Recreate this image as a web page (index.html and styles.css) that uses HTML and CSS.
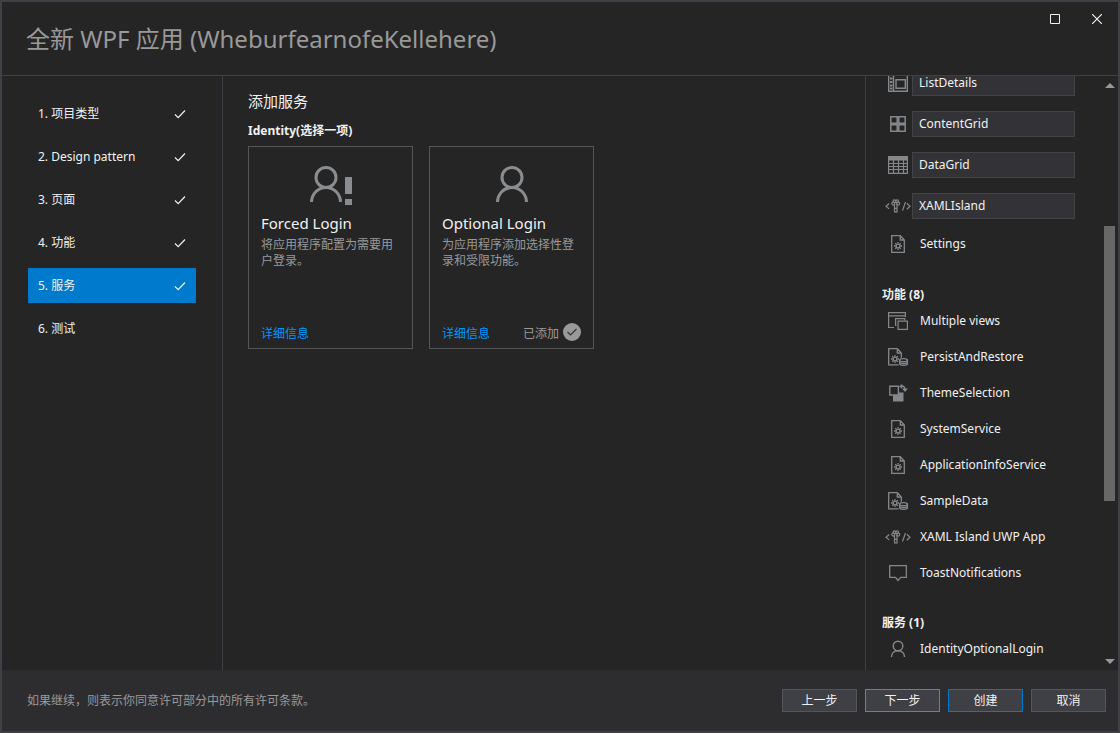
FILE: index.html
```html
<!DOCTYPE html>
<html lang="zh-CN">
<head>
<meta charset="utf-8">
<title>全新 WPF 应用</title>
<link rel="stylesheet" href="styles.css">
</head>
<body>
<svg class="defs" aria-hidden="true">
  <symbol id="check" viewBox="0 0 12 12"><path d="M1 6.500 4.200 9.700 11 2.500" fill="none" stroke="currentColor" stroke-width="1.200"/></symbol>
  <symbol id="user" viewBox="0 0 32 36"><g fill="none" stroke="currentColor" stroke-width="3"><circle cx="16" cy="11.500" r="10"/><path d="M1.500 36.500C1.500 28 8 21.500 16 21.500s14.500 6.500 14.500 15"/></g></symbol>
  <symbol id="user-small" viewBox="0 0 16 18"><g fill="none" stroke="currentColor" stroke-width="1.400"><circle cx="8" cy="6" r="4.800"/><path d="M1.500 17C1.500 13.500 4 10.800 8 10.800s6.500 2.700 6.500 6.200"/></g></symbol>
  <symbol id="list-details" viewBox="0 0 20 18"><g fill="none" stroke="currentColor" stroke-width="1.400"><path d="M.7.7h18.600v16.600H.7zM5.500 1v16M8 5.700h9.300v8.600H8z"/><path d="M2 4.500h2.500M2 8h2.500M2 11.500h2.500M2 14.500h2.500" stroke-width="2"/></g></symbol>
  <symbol id="content-grid" viewBox="0 0 16 16"><path d="M.8.8h6.400v6.400H.8zM8.800.8h6.400v6.400H8.800zM.8 8.800h6.400v6.400H.8zM8.800 8.800h6.400v6.400H8.800z" fill="none" stroke="currentColor" stroke-width="1.500"/></symbol>
  <symbol id="data-grid" viewBox="0 0 20 18"><path d="M0 0h20v4.500H0z" fill="currentColor"/><path d="M.6.6h18.800v16.800H.6zM5.500 4v13.500M10.500 4v13.500M15.500 4v13.500M1 7.500h18M1 10.500h18M1 13.500h18" fill="none" stroke="currentColor" stroke-width="1.200"/></symbol>
  <symbol id="xaml" viewBox="0 0 26 14"><g fill="none" stroke="currentColor" stroke-width="1.200"><path d="M4.200 4.500 1 7.200l3.200 2.700M21.800 4.200l3.200 3-3.200 3M20.500 3l-3 8.500"/><path d="M9.500 5v7.800h2.500V5M9.500 9.300H12"/><circle cx="8.300" cy="4.600" r="1.500"/><circle cx="13.200" cy="4.600" r="1.500"/><circle cx="9.400" cy="2.200" r="1.400"/><circle cx="12.100" cy="2.200" r="1.400"/></g></symbol>
  <symbol id="gear" viewBox="0 0 8 8"><g fill="none" stroke="currentColor"><circle cx="4" cy="4" r="1.900" stroke-width="1.400"/><path d="M4 0v1.500M4 6.500V8M0 4h1.500M6.500 4H8M1.200 1.200l1.200 1.200M5.600 5.600l1.200 1.200M6.800 1.200 5.600 2.400M2.400 5.600 1.200 6.800" stroke-width="1.300"/></g></symbol>
  <symbol id="file-gear" viewBox="0 0 14 18"><path d="M.7.7h8.600l4 4.300v12.300H.7zM9.300.8V5h4" fill="none" stroke="currentColor" stroke-width="1.300"/><use href="#gear" x="3" y="7" width="8" height="8"/></symbol>
  <symbol id="file-data" viewBox="0 0 20 18"><g fill="none" stroke="currentColor" stroke-width="1.300"><path d="M10.500 16.800H.7V.7h8.600l4 4.300v4.800M9.300.8V5h4"/><ellipse cx="15.500" cy="12.200" rx="3.900" ry="1.500"/><path d="M11.600 12.200v3.600c0 2 7.800 2 7.800 0v-3.600M11.600 14c0 2 7.800 2 7.800 0"/></g><use href="#gear" x="3" y="7" width="8" height="8"/></symbol>
  <symbol id="views" viewBox="0 0 20 18"><g fill="none" stroke="currentColor" stroke-width="1.200"><path d="M6 15.500H.6V.6h16.800V5M.6 3.900h16.800M8.500 13.500H7.600V6.600h9.200v1.800"/><path d="M10.100 9.100h9.300v8.200h-9.300z"/></g></symbol>
  <symbol id="theme" viewBox="0 0 20 18"><path d="M5 8.500h10.500v9H5z" fill="currentColor"/><path d="M1.800 2.300h8.600V11H1.800z" class="tile" stroke="currentColor" stroke-width="1.400"/><path d="M13 2.200c2.500-.5 4 .8 4 3.800" fill="none" stroke="currentColor" stroke-width="1.500"/><path d="M14.200 0v4.800L11 2.300zM14 4.500h6L17 8z" fill="currentColor"/></symbol>
  <symbol id="toast" viewBox="0 0 18 17"><path d="M.7.7h16.600v11.600h-5.600L9 15.500l-2.500-3.200H.7z" fill="none" stroke="currentColor" stroke-width="1.300"/></symbol>
</svg>
<div class="window">
  <header class="titlebar">
    <h1>全新 WPF 应用 (WheburfearnofeKellehere)</h1>
    <div class="window-buttons">
      <button type="button" aria-label="最大化"><svg width="10" height="10" viewBox="0 0 10 10"><path d="M.5.5h9v9h-9z" fill="none" stroke="currentColor"/></svg></button>
      <button type="button" aria-label="关闭"><svg width="10" height="10" viewBox="0 0 10 10"><path d="m0 0 10 10M10 0 0 10" fill="none" stroke="currentColor" stroke-width="1.200"/></svg></button>
    </div>
  </header>
  <div class="body">
    <nav class="steps">
      <a href="#type">1. 项目类型<svg class="check"><use href="#check"/></svg></a>
      <a href="#pattern">2. Design pattern<svg class="check"><use href="#check"/></svg></a>
      <a href="#pages">3. 页面<svg class="check"><use href="#check"/></svg></a>
      <a href="#features">4. 功能<svg class="check"><use href="#check"/></svg></a>
      <a href="#services" class="current" aria-current="step">5. 服务<svg class="check"><use href="#check"/></svg></a>
      <a href="#testing">6. 测试</a>
    </nav>
    <main class="content">
      <h2>添加服务</h2>
      <h3>Identity(选择一项)</h3>
      <div class="cards">
        <article class="card">
          <div class="card-icon"><svg class="user"><use href="#user"/></svg><svg class="bang" viewBox="0 0 7 28"><path d="M0 0h7v17H0zM0 22h7v6H0z" fill="currentColor"/></svg></div>
          <h4>Forced Login</h4>
          <p>将应用程序配置为需要用户登录。</p>
          <div class="card-foot"><a href="#forced">详细信息</a></div>
        </article>
        <article class="card">
          <div class="card-icon"><svg class="user"><use href="#user"/></svg></div>
          <h4>Optional Login</h4>
          <p>为应用程序添加选择性登录和受限功能。</p>
          <div class="card-foot"><a href="#optional">详细信息</a><span class="added">已添加<svg class="badge" viewBox="0 0 18 18"><circle cx="9" cy="9" r="9" fill="currentColor"/><path d="m4.500 9 3 3 6-6" fill="none" stroke="#333337" stroke-width="1.200"/></svg></span></div>
        </article>
      </div>
    </main>
    <aside class="summary">
      <div class="summary-list">
        <ul class="pages">
          <li class="editable"><span class="icon"><svg width="20" height="18"><use href="#list-details"/></svg></span><input type="text" aria-label="页面名称" value="ListDetails"></li>
          <li class="editable"><span class="icon"><svg width="16" height="16"><use href="#content-grid"/></svg></span><input type="text" aria-label="页面名称" value="ContentGrid"></li>
          <li class="editable"><span class="icon"><svg width="20" height="18"><use href="#data-grid"/></svg></span><input type="text" aria-label="页面名称" value="DataGrid"></li>
          <li class="editable"><span class="icon"><svg width="26" height="14"><use href="#xaml"/></svg></span><input type="text" aria-label="页面名称" value="XAMLIsland"></li>
          <li><span class="icon"><svg width="14" height="18"><use href="#file-gear"/></svg></span><span class="name">Settings</span></li>
        </ul>
        <h5>功能 (8)</h5>
        <ul>
          <li><span class="icon"><svg width="20" height="18"><use href="#views"/></svg></span><span class="name">Multiple views</span></li>
          <li><span class="icon"><svg width="20" height="18"><use href="#file-data"/></svg></span><span class="name">PersistAndRestore</span></li>
          <li><span class="icon"><svg width="20" height="18"><use href="#theme"/></svg></span><span class="name">ThemeSelection</span></li>
          <li><span class="icon"><svg width="14" height="18"><use href="#file-gear"/></svg></span><span class="name">SystemService</span></li>
          <li><span class="icon"><svg width="14" height="18"><use href="#file-gear"/></svg></span><span class="name">ApplicationInfoService</span></li>
          <li><span class="icon"><svg width="20" height="18"><use href="#file-data"/></svg></span><span class="name">SampleData</span></li>
          <li><span class="icon"><svg width="26" height="14"><use href="#xaml"/></svg></span><span class="name">XAML Island UWP App</span></li>
          <li><span class="icon"><svg width="18" height="17"><use href="#toast"/></svg></span><span class="name">ToastNotifications</span></li>
        </ul>
        <h5>服务 (1)</h5>
        <ul>
          <li><span class="icon"><svg width="16" height="18"><use href="#user-small"/></svg></span><span class="name">IdentityOptionalLogin</span></li>
        </ul>
      </div>
      <div class="scrollbar">
        <svg class="arrow" viewBox="0 0 10 5"><path d="M0 5 5 0l5 5z" fill="currentColor"/></svg>
        <div class="track"><div class="thumb"></div></div>
        <svg class="arrow" viewBox="0 0 10 5"><path d="m0 0 5 5 5-5z" fill="currentColor"/></svg>
      </div>
    </aside>
  </div>
  <footer class="footer">
    <p>如果继续，则表示你同意许可部分中的所有许可条款。</p>
    <div class="actions">
      <button type="button">上一步</button>
      <button type="button" class="forward">下一步</button>
      <button type="button" class="create">创建</button>
      <button type="button">取消</button>
    </div>
  </footer>
</div>
</body>
</html>
```
FILE: styles.css
```css
* {
  box-sizing: border-box;
  margin: 0;
  padding: 0;
}

body {
  background: #252526;
  color: #f1f1f1;
  font: 12px/16px "Noto Sans", "Noto Sans CJK SC", sans-serif;
}

button,
input {
  font: inherit;
  color: inherit;
}

a {
  text-decoration: none;
}

ul {
  list-style: none;
}

.defs {
  position: absolute;
  width: 0;
  height: 0;
}

.window {
  display: flex;
  flex-direction: column;
  height: 100vh;
  border: 2px solid #3f3f46;
}

.titlebar {
  display: flex;
  justify-content: space-between;
  align-items: flex-start;
  border-bottom: 1px solid #3f3f46;
  padding: 0 0 19px 24px;
}

.titlebar h1 {
  padding-top: 19px;
  color: #999;
  font-size: 24px;
  line-height: 35px;
  font-weight: 400;
}

.window-buttons {
  display: flex;
}

.window-buttons button {
  display: grid;
  place-items: center;
  width: 42px;
  height: 34px;
  border: 0;
  background: none;
}

.body {
  display: grid;
  grid-template-columns: 221px 1fr 253px;
  flex: 1;
  min-height: 0;
}

.steps {
  display: flex;
  flex-direction: column;
  gap: 8px;
  padding: 20px 26px;
  border-right: 1px solid #3f3f46;
}

.steps a {
  display: flex;
  align-items: center;
  justify-content: space-between;
  height: 35px;
  padding: 0 10px;
  color: inherit;
}

.steps .current {
  background: #007acc;
}

.check {
  width: 12px;
  height: 12px;
}

.content {
  padding: 15px 25px;
}

.content h2 {
  font-size: 15px;
  line-height: 20px;
  font-weight: 400;
}

.content h3 {
  margin-top: 12px;
  font-size: 12px;
  line-height: 16px;
}

.cards {
  display: flex;
  flex-wrap: wrap;
  gap: 16px;
  margin-top: 7px;
}

.card {
  display: flex;
  flex-direction: column;
  width: 165px;
  min-height: 203px;
  padding: 18px 12px 6px;
  border: 1px solid #555;
  color: #999;
}

.card-icon {
  display: flex;
  justify-content: center;
  align-items: flex-end;
  gap: 3px;
  height: 40px;
  color: #8a8d8f;
}

.user {
  width: 32px;
  height: 36px;
  margin-bottom: 3px;
}

.bang {
  width: 7px;
  height: 28px;
}

.card h4 {
  margin: 7px 0 3px;
  color: #f1f1f1;
  font-size: 15px;
  line-height: 22px;
  font-weight: 400;
}

.card-foot {
  display: flex;
  justify-content: space-between;
  align-items: flex-end;
  margin-top: auto;
}

.card-foot a {
  color: #0097fb;
}

.added {
  display: flex;
  align-items: flex-end;
  gap: 4px;
}

.badge {
  width: 18px;
  height: 18px;
  margin-bottom: 1px;
}

.summary {
  display: flex;
  border-left: 1px solid #3f3f46;
  overflow: hidden;
}

.summary-list {
  flex: 1;
  min-width: 0;
  padding: 0 26px 0 16px;
}

.pages {
  margin-top: -14px;
  padding-bottom: 1px;
}

.summary li {
  display: flex;
  align-items: center;
  height: 36px;
}

.summary .editable {
  height: 41px;
}

.icon {
  display: flex;
  justify-content: center;
  width: 32px;
  margin-right: -2px;
  color: #85888a;
}

.tile {
  fill: #252526;
}

.summary input {
  flex: 1;
  min-width: 0;
  height: 26px;
  padding: 0 6px;
  border: 1px solid #434346;
  background: #333337;
}

.name {
  padding-left: 8px;
}

.summary h5 {
  margin-top: 24px;
  font-size: 12px;
  line-height: 16px;
}

.scrollbar {
  display: flex;
  flex-direction: column;
  align-items: center;
  flex: none;
  width: 17px;
  padding: 7px 0 6px;
  color: #999;
}

.arrow {
  width: 10px;
  height: 5px;
}

.track {
  display: grid;
  grid-template-rows: 138fr 275fr 158fr;
  flex: 1;
}

.thumb {
  grid-row: 2;
  width: 11px;
  background: #686868;
}

.footer {
  display: flex;
  justify-content: space-between;
  align-items: center;
  height: 61px;
  padding: 0 12px 0 25px;
  background: #2d2d30;
  color: #999;
}

.actions {
  display: flex;
  gap: 8px;
}

.actions button {
  width: 75px;
  height: 23px;
  border: 1px solid #555558;
  background: #3f3f46;
  color: #f1f1f1;
}

.actions button.forward {
  border: 1px solid #1c97ea;
}

.actions button.create {
  border: 1px solid #007acc;
}
```
